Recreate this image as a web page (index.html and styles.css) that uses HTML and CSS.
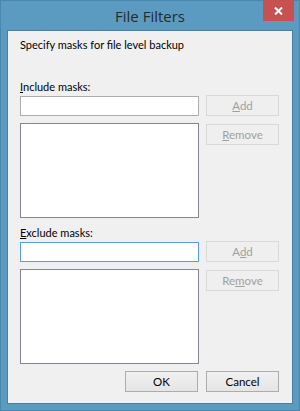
FILE: index.html
```html
<!DOCTYPE html>
<html>
<head>
<meta charset="utf-8">
<link rel="stylesheet" href="styles.css">
</head>
<body>
<div class="window">
  <div class="titlebar">
    <span class="spacer"></span>
    <div class="title">File Filters</div>
    <div class="close">
      <svg width="9" height="8" viewBox="0 0 9 8"><path d="M1 0.5 L8 7.5 M8 0.5 L1 7.5" stroke="#fff" stroke-width="2" fill="none"/></svg>
    </div>
  </div>
  <div class="client">
    <p class="intro">Specify masks for file level backup</p>
    <section class="group">
      <div class="label"><u>I</u>nclude masks:</div>
      <div class="grid">
        <input class="text" type="text">
        <button class="btn" disabled><u>A</u>dd</button>
        <div class="list"></div>
        <button class="btn rm" disabled><u>R</u>emove</button>
      </div>
    </section>
    <section class="group second">
      <div class="label"><u>E</u>xclude masks:</div>
      <div class="grid">
        <input class="text focus" type="text">
        <button class="btn" disabled>A<u>d</u>d</button>
        <div class="list"></div>
        <button class="btn rm" disabled>Re<u>m</u>ove</button>
      </div>
    </section>
    <div class="footer">
      <button class="btn on">OK</button>
      <button class="btn on">Cancel</button>
    </div>
  </div>
</div>
</body>
</html>
```
FILE: styles.css
```css
* { box-sizing: border-box; }
html, body { margin: 0; padding: 0; background: #5b9bc2; }
.window {
  width: 300px;
  height: 411px;
  background: #5b9bc2;
  box-shadow: inset 0 0 0 1px #4b87ab;
  display: flex;
  flex-direction: column;
  padding: 0 7px 7px 7px;
  font-family: "Lato", "Open Sans", sans-serif;
}
.titlebar {
  height: 30px;
  display: grid;
  grid-template-columns: 1fr auto 1fr;
  align-items: start;
  margin: 0 -1px 0 -1px;
}
.title {
  font-family: "Open Sans", "Noto Sans", sans-serif;
  font-size: 15px;
  color: #2a2a2a;
  line-height: 20px;
  padding-top: 6px;
}
.close {
  justify-self: end;
  width: 31px;
  height: 21px;
  background: #c75050;
  display: flex;
  align-items: center;
  justify-content: center;
  padding-top: 1px;
}
.close svg { display: block; }
.client {
  flex: 1;
  background: #f0f0f0;
  border: 1px solid #4a7fa0;
  padding: 0 0 0 12px;
  display: flex;
  flex-direction: column;
  font-size: 11px;
  color: #000;
}
.intro {
  margin: 6px 0 0 0;
  line-height: 15px;
}
.group { margin-top: 27px; }
.group.second { margin-top: 7px; }
.label { line-height: 15px; margin-bottom: 1px; }
.grid {
  display: grid;
  grid-template-columns: 179px 73px;
  grid-template-rows: 21px 95px;
  column-gap: 7px;
  row-gap: 7px;
}
.text {
  margin: 1px 0 0 0;
  height: 20px;
  border: 1px solid #abadb3;
  background: #fff;
  padding: 0;
  outline: none;
  font: inherit;
}
.text.focus { border-color: #569de5; }
.list {
  background: #fff;
  border: 1px solid #828790;
}
.btn {
  height: 21px;
  width: 73px;
  border: 1px solid #d9d9d9;
  background: #efefef;
  color: #a0a0a0;
  font: inherit;
  font-size: 11.5px;
  padding: 0;
  margin: 0;
  line-height: 18px;
}
.btn.rm { margin-top: 1px; }
.btn.on {
  border-color: #acacac;
  background: linear-gradient(#f0f0f0, #e5e5e5);
  color: #000;
}
.footer {
  margin-top: 7px;
  display: flex;
  justify-content: flex-end;
  gap: 8px;
  padding-right: 13px;
}
```
